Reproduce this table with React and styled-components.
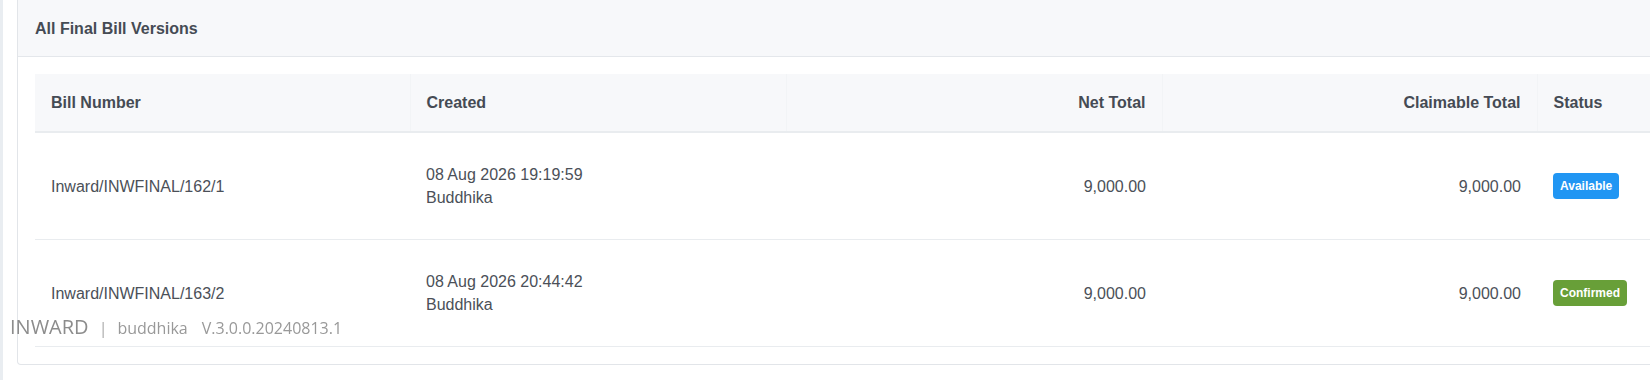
import React from "react";
import styled, { createGlobalStyle } from "styled-components";

const GlobalStyle = createGlobalStyle`
  html,
  body {
    margin: 0;
    padding: 0;
    background: #fff;
    overflow: hidden;
  }
  body {
    font-family: "Liberation Sans", Arial, sans-serif;
    font-size: 16px;
    color: #495057;
  }
`;

const bills = [
  {
    number: "Inward/INWFINAL/162/1",
    created: "08 Aug 2026 19:19:59",
    by: "Buddhika",
    net: "9,000.00",
    claimable: "9,000.00",
    status: "Available",
  },
  {
    number: "Inward/INWFINAL/163/2",
    created: "08 Aug 2026 20:44:42",
    by: "Buddhika",
    net: "9,000.00",
    claimable: "9,000.00",
    status: "Confirmed",
  },
];

const App = () => {
  return (
    <>
      <GlobalStyle />
      <Page>
        <Card>
          <CardHeader>
            <CardTitle>All Final Bill Versions</CardTitle>
          </CardHeader>
          <CardBody>
            <Table>
              <colgroup>
                <col style={{ width: "375px" }} />
                <col style={{ width: "376px" }} />
                <col style={{ width: "376px" }} />
                <col style={{ width: "375px" }} />
                <col />
              </colgroup>
              <thead>
                <tr>
                  <Th>Bill Number</Th>
                  <Th>Created</Th>
                  <Th $right>Net Total</Th>
                  <Th $right>Claimable Total</Th>
                  <Th>Status</Th>
                </tr>
              </thead>
              <tbody>
                {bills.map((bill) => (
                  <tr key={bill.number}>
                    <Td>{bill.number}</Td>
                    <Td>
                      <div>{bill.created}</div>
                      <div>{bill.by}</div>
                    </Td>
                    <Td $right>{bill.net}</Td>
                    <Td $right>{bill.claimable}</Td>
                    <Td>
                      <Badge $status={bill.status}>{bill.status}</Badge>
                    </Td>
                  </tr>
                ))}
              </tbody>
            </Table>
          </CardBody>
        </Card>
      </Page>
      <Footer>
        <FooterBrand>INWARD</FooterBrand>
        <FooterSep>|</FooterSep>
        <FooterUser>buddhika</FooterUser>
        <FooterVersion>V.3.0.0.20240813.1</FooterVersion>
      </Footer>
    </>
  );
};

export default App;

const Page = styled.div`
  display: flex;
  width: 1720px;
  padding-left: 14px;
  border-left: 3px solid #e9edf1;
  min-height: 380px;
  box-sizing: border-box;
`;

const Card = styled.section`
  flex: 1;
  align-self: flex-start;
  background: #fff;
  border: 1px solid #e2e5e9;
  border-top: none;
  border-radius: 0 0 4px 4px;
`;

const CardHeader = styled.div`
  background: #f7f8fa;
  border-bottom: 1px solid #e4e7eb;
  padding: 17px 17px 16px;
`;

const CardTitle = styled.h2`
  margin: 0;
  font-size: 16px;
  font-weight: 700;
  line-height: 23px;
  color: #454b54;
`;

const CardBody = styled.div`
  padding: 17px 16px 17px 17px;
`;

const Table = styled.table`
  width: 100%;
  border-collapse: collapse;
  table-layout: fixed;
`;

const Th = styled.th`
  background: #f7f8fa;
  padding: 17px 16px;
  line-height: 23px;
  font-size: 16px;
  font-weight: 700;
  color: #454b54;
  text-align: ${(p) => (p.$right ? "right" : "left")};
  border-bottom: 2px solid #e9ecef;
  & + & {
    border-left: 1px solid #f2f4f6;
  }
`;

const Td = styled.td`
  padding: 30px 16px;
  line-height: 23px;
  font-size: 16px;
  color: #4b5058;
  vertical-align: middle;
  text-align: ${(p) => (p.$right ? "right" : "left")};
  border-bottom: 1px solid #e9ecef;
`;

const Badge = styled.span`
  display: inline-block;
  height: 26px;
  line-height: 26px;
  padding: 0 7px;
  border-radius: 4px;
  font-size: 12px;
  font-weight: 700;
  color: #fff;
  background: ${(p) => (p.$status === "Confirmed" ? "#689f38" : "#2196f3")};
  vertical-align: middle;
`;

const Footer = styled.div`
  position: fixed;
  left: 10px;
  bottom: 40px;
  display: flex;
  align-items: baseline;
  font-family: "Open Sans", "Liberation Sans", sans-serif;
  pointer-events: none;
`;

const FooterBrand = styled.span`
  font-size: 20px;
  color: #8c8c8c;
`;

const FooterSep = styled.span`
  font-size: 16px;
  color: #aaa;
  margin: 0 10px;
`;

const FooterUser = styled.span`
  font-size: 16px;
  color: #999;
  margin-right: 14px;
`;

const FooterVersion = styled.span`
  font-size: 16px;
  color: #999;
`;
